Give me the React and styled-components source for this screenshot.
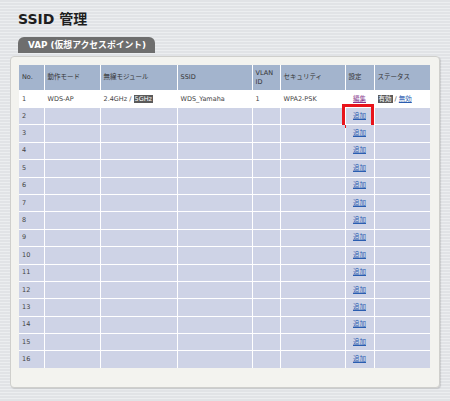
import React from 'react';
import styled, { createGlobalStyle } from 'styled-components';

const GlobalStyle = createGlobalStyle`
  html, body {
    margin: 0;
    padding: 0;
  }
  body {
    width: 450px;
    height: 401px;
    overflow: hidden;
    background: repeating-linear-gradient(
      180deg,
      #e1e3e6 0px,
      #e1e3e6 2px,
      #eceef0 2px,
      #eceef0 3px
    );
    font-family: "DejaVu Sans", "Noto Sans CJK JP", sans-serif;
    color: #333;
  }
`;

const Page = styled.div`
  padding: 10px 0 0 10px;
`;

const Title = styled.h1`
  margin: 0 0 9px 8px;
  height: 18px;
  font-size: 14px;
  line-height: 18px;
  font-weight: bold;
  color: #1e1e1e;
`;

const Tab = styled.div`
  display: inline-block;
  margin-left: 8px;
  height: 16px;
  padding: 0 9px 0 10px;
  background: #6e6e6e;
  border-radius: 6px 6px 0 0;
  color: #fff;
  font-size: 8.8px;
  font-weight: bold;
  line-height: 17px;
  vertical-align: top;
`;

const Panel = styled.div`
  width: 413px;
  padding: 8px 7px 19px 8px;
  background: #f3f3ef;
  border: 1px solid #cfcfcc;
  border-radius: 4px;
  box-shadow: 1px 1px 1px rgba(0, 0, 0, 0.12);
`;

const Table = styled.table`
  width: 411px;
  table-layout: fixed;
  border-collapse: collapse;
  border-style: hidden;
  font-size: 6.5px;
`;

const HeadCell = styled.th`
  height: 25px;
  padding: 0 3px 0 3px;
  background: #a3b4cd;
  border: 1px solid #fff;
  font-weight: normal;
  text-align: left;
  vertical-align: middle;
  line-height: 9px;
  color: #333;
`;

const Cell = styled.td`
  position: relative;
  height: ${(p) => (p.$first ? '16px' : '16.4px')};
  padding: 0 3px 0 3px;
  background: ${(p) => (p.$first ? '#ffffff' : '#ced3e6')};
  border: 1px solid #fff;
  text-align: ${(p) => (p.$center ? 'center' : 'left')};
  vertical-align: middle;
  line-height: 9px;
  color: #444;
  white-space: nowrap;
`;

const Link = styled.a`
  color: ${(p) => (p.$visited ? '#8a3b8f' : '#2a5db0')};
  text-decoration: underline;
  cursor: pointer;
`;

const Marked = styled.span`
  background: #5a5a5a;
  color: #fff;
  padding: 0 1px;
`;

const Highlight = styled.span`
  position: absolute;
  top: -4px;
  left: -4px;
  right: 0px;
  bottom: -4px;
  border: 3px solid #e8141b;
  pointer-events: none;
`;

const widths = [25, 56, 77, 75, 28, 65, 29, 56];
const headers = ['No.', '動作モード', '無線モジュール', 'SSID', 'VLAN ID', 'セキュリティ', '設定', 'ステータス'];

const rows = Array.from({ length: 16 }, (_, i) => i + 1);

const App = () => (
  <>
    <GlobalStyle />
    <Page>
      <Title>SSID 管理</Title>
      <Tab>VAP (仮想アクセスポイント)</Tab>
      <Panel>
        <Table>
          <colgroup>
            {widths.map((w, i) => (
              <col key={i} style={{ width: w }} />
            ))}
          </colgroup>
          <thead>
            <tr>
              {headers.map((h) => (
                <HeadCell key={h}>{h === 'VLAN ID' ? <>VLAN<br />ID</> : h}</HeadCell>
              ))}
            </tr>
          </thead>
          <tbody>
            {rows.map((n) =>
              n === 1 ? (
                <tr key={n}>
                  <Cell $first>1</Cell>
                  <Cell $first>WDS-AP</Cell>
                  <Cell $first>
                    2.4GHz / <Marked>5GHz</Marked>
                  </Cell>
                  <Cell $first>WDS_Yamaha</Cell>
                  <Cell $first>1</Cell>
                  <Cell $first>WPA2-PSK</Cell>
                  <Cell $first $center>
                    <Link $visited>編集</Link>
                  </Cell>
                  <Cell $first>
                    <Marked>有効</Marked> / <Link>無効</Link>
                  </Cell>
                </tr>
              ) : (
                <tr key={n}>
                  <Cell>{n}</Cell>
                  <Cell />
                  <Cell />
                  <Cell />
                  <Cell />
                  <Cell />
                  <Cell $center>
                    <Link>追加</Link>
                    {n === 2 && <Highlight />}
                  </Cell>
                  <Cell />
                </tr>
              )
            )}
          </tbody>
        </Table>
      </Panel>
    </Page>
  </>
);

export default App;
